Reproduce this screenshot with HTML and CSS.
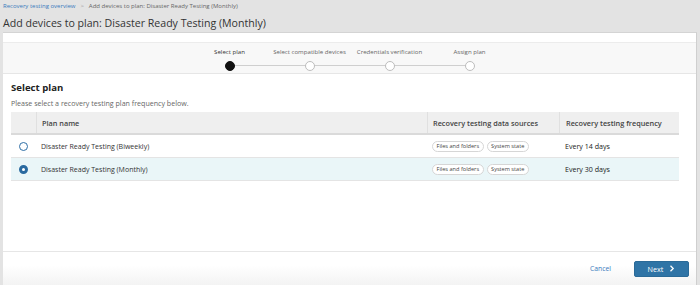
FILE: index.html
```html
<!DOCTYPE html>
<html>
<head>
<meta charset="utf-8">
<link rel="stylesheet" href="styles.css">
</head>
<body>
<div class="page">
  <div class="topbar">
    <div class="crumbs"><a class="crumb-link">Recovery testing overview</a><span class="sep">&gt;</span><span>Add devices to plan: Disaster Ready Testing (Monthly)</span></div>
    <h1 class="title">Add devices to plan: Disaster Ready Testing (Monthly)</h1>
  </div>
  <div class="panel">
    <div class="stepper">
      <div class="steps">
        <div class="step active"><span class="label">Select plan</span><span class="dot"></span></div>
        <div class="step"><span class="label">Select compatible devices</span><span class="dot"></span></div>
        <div class="step"><span class="label">Credentials verification</span><span class="dot"></span></div>
        <div class="step"><span class="label">Assign plan</span><span class="dot"></span></div>
      </div>
    </div>
    <div class="content">
      <h2 class="heading">Select plan</h2>
      <p class="sub">Please select a recovery testing plan frequency below.</p>
      <div class="table">
        <div class="row head">
          <div class="c sel"></div>
          <div class="c name">Plan name</div>
          <div class="c src">Recovery testing data sources</div>
          <div class="c freq">Recovery testing frequency</div>
        </div>
        <div class="row">
          <div class="c sel"><span class="radio"></span></div>
          <div class="c name">Disaster Ready Testing (Biweekly)</div>
          <div class="c src"><span class="tag">Files and folders</span><span class="tag">System state</span></div>
          <div class="c freq">Every 14 days</div>
        </div>
        <div class="row selected">
          <div class="c sel"><span class="radio on"></span></div>
          <div class="c name">Disaster Ready Testing (Monthly)</div>
          <div class="c src"><span class="tag">Files and folders</span><span class="tag">System state</span></div>
          <div class="c freq">Every 30 days</div>
        </div>
      </div>
    </div>
    <div class="footer">
      <a class="cancel">Cancel</a>
      <button class="next">Next<svg width="6" height="7" viewBox="0 0 6 7"><path d="M1.5 0.8 L4.2 3.5 L1.5 6.2" fill="none" stroke="#fff" stroke-width="1.3"/></svg></button>
    </div>
  </div>
</div>
</body>
</html>
```
FILE: styles.css
```css
* { box-sizing: border-box; }
html, body { margin: 0; padding: 0; }
body {
  width: 700px;
  height: 285px;
  overflow: hidden;
  background: #e3e3e3;
  font-family: "Open Sans", "Noto Sans", sans-serif;
  color: #333;
}
.page {
  height: 285px;
  display: flex;
  flex-direction: column;
}
.topbar {
  padding: 1px 0 0 3px;
  height: 32px;
}
.crumbs {
  font-size: 6px;
  color: #666;
  line-height: 10px;
  display: flex;
  gap: 4px;
}
.crumb-link { color: #3a7bbd; }
.sep { color: #999; padding: 0 1px; }
.title {
  margin: 5px 0 0 0;
  font-size: 10.6px;
  font-weight: 400;
  line-height: 15px;
  color: #333;
}
.panel {
  flex: 1;
  margin: 0 3px 0 3px;
  background: #fff;
  border-top: 1px solid #d4d4d4;
  border-right: 1px solid #cfcfcf;
  display: flex;
  flex-direction: column;
  padding-top: 9px;
}
.stepper {
  height: 32px;
  background: #f8f8f8;
  border-top: 1px solid #ececec;
  border-bottom: 1px solid #e6e6e6;
  display: flex;
  justify-content: center;
}
.steps {
  display: flex;
}
.step {
  width: 80px;
  display: flex;
  flex-direction: column;
  align-items: center;
  position: relative;
  padding-top: 4px;
}
.step .label {
  font-size: 6.1px;
  color: #666;
  line-height: 10px;
}
.step.active .label { color: #333; }
.step .dot {
  margin-top: 4px;
  width: 10px;
  height: 10px;
  border-radius: 50%;
  border: 1px solid #bdbdbd;
  background: #fff;
  position: relative;
  z-index: 1;
}
.step.active .dot { background: #111; border-color: #111; }
.step + .step::before {
  content: "";
  position: absolute;
  top: 22px;
  right: 40px;
  width: 80px;
  height: 1px;
  background: #cfcfcf;
}
.content {
  padding: 0 17px 0 8px;
  flex: 1;
}
.heading {
  margin: 7px 0 0 0;
  font-size: 9.6px;
  font-weight: 700;
  line-height: 14px;
  color: #222;
}
.sub {
  margin: 3px 0 0 0;
  font-size: 7.1px;
  color: #666;
  line-height: 10px;
}
.table {
  margin-top: 4px;
}
.row {
  display: grid;
  grid-template-columns: 25px 391px 132px 121px;
  height: 23px;
  border-bottom: 1px solid #e4e4e4;
  align-items: stretch;
}
.row.head {
  background: #efefef;
  border-bottom: 2px solid #dadada;
  height: 23px;
}
.row.selected { background: #eaf6f8; }
.c {
  display: flex;
  align-items: center;
  font-size: 7px;
  color: #333;
  padding-left: 5px;
}
.c.sel { justify-content: center; padding-left: 0; }
.c.freq { font-size: 7.1px; padding-left: 6px; color: #222; }
.row.head .c {
  font-weight: 600;
  color: #444;
  font-size: 7.3px;
}
.row.head .c + .c { border-left: 1px solid #e0e0e0; }
.radio {
  width: 9px;
  height: 9px;
  border-radius: 50%;
  border: 1.2px solid #2f6fa6;
  background: #fff;
}
.radio.on {
  border: 3px solid #2a6aa0;
  background: #fff;
}
.c.src { gap: 3px; padding-left: 5px; }
.tag {
  font-size: 5.6px;
  color: #444;
  border: 1px solid #d6d6d6;
  border-radius: 6px;
  padding: 1px 3.5px;
  line-height: 7px;
  background: #fff;
}
.footer {
  height: 34px;
  border-top: 1px solid #e6e6e6;
  display: flex;
  align-items: center;
  justify-content: flex-end;
  gap: 23px;
  padding: 0 7px 0 0;
  background: linear-gradient(#fff 40%, #f3f3f3);
}
.cancel {
  font-size: 6.8px;
  color: #3a7bbd;
}
.next {
  width: 55px;
  height: 16px;
  background: #2f74a6;
  border: 1px solid #2a6a98;
  border-radius: 2px;
  color: #fff;
  font-family: "Open Sans", "Noto Sans", sans-serif;
  font-size: 7.2px;
  display: flex;
  align-items: center;
  justify-content: center;
  gap: 6px;
  padding: 0;
}
```
